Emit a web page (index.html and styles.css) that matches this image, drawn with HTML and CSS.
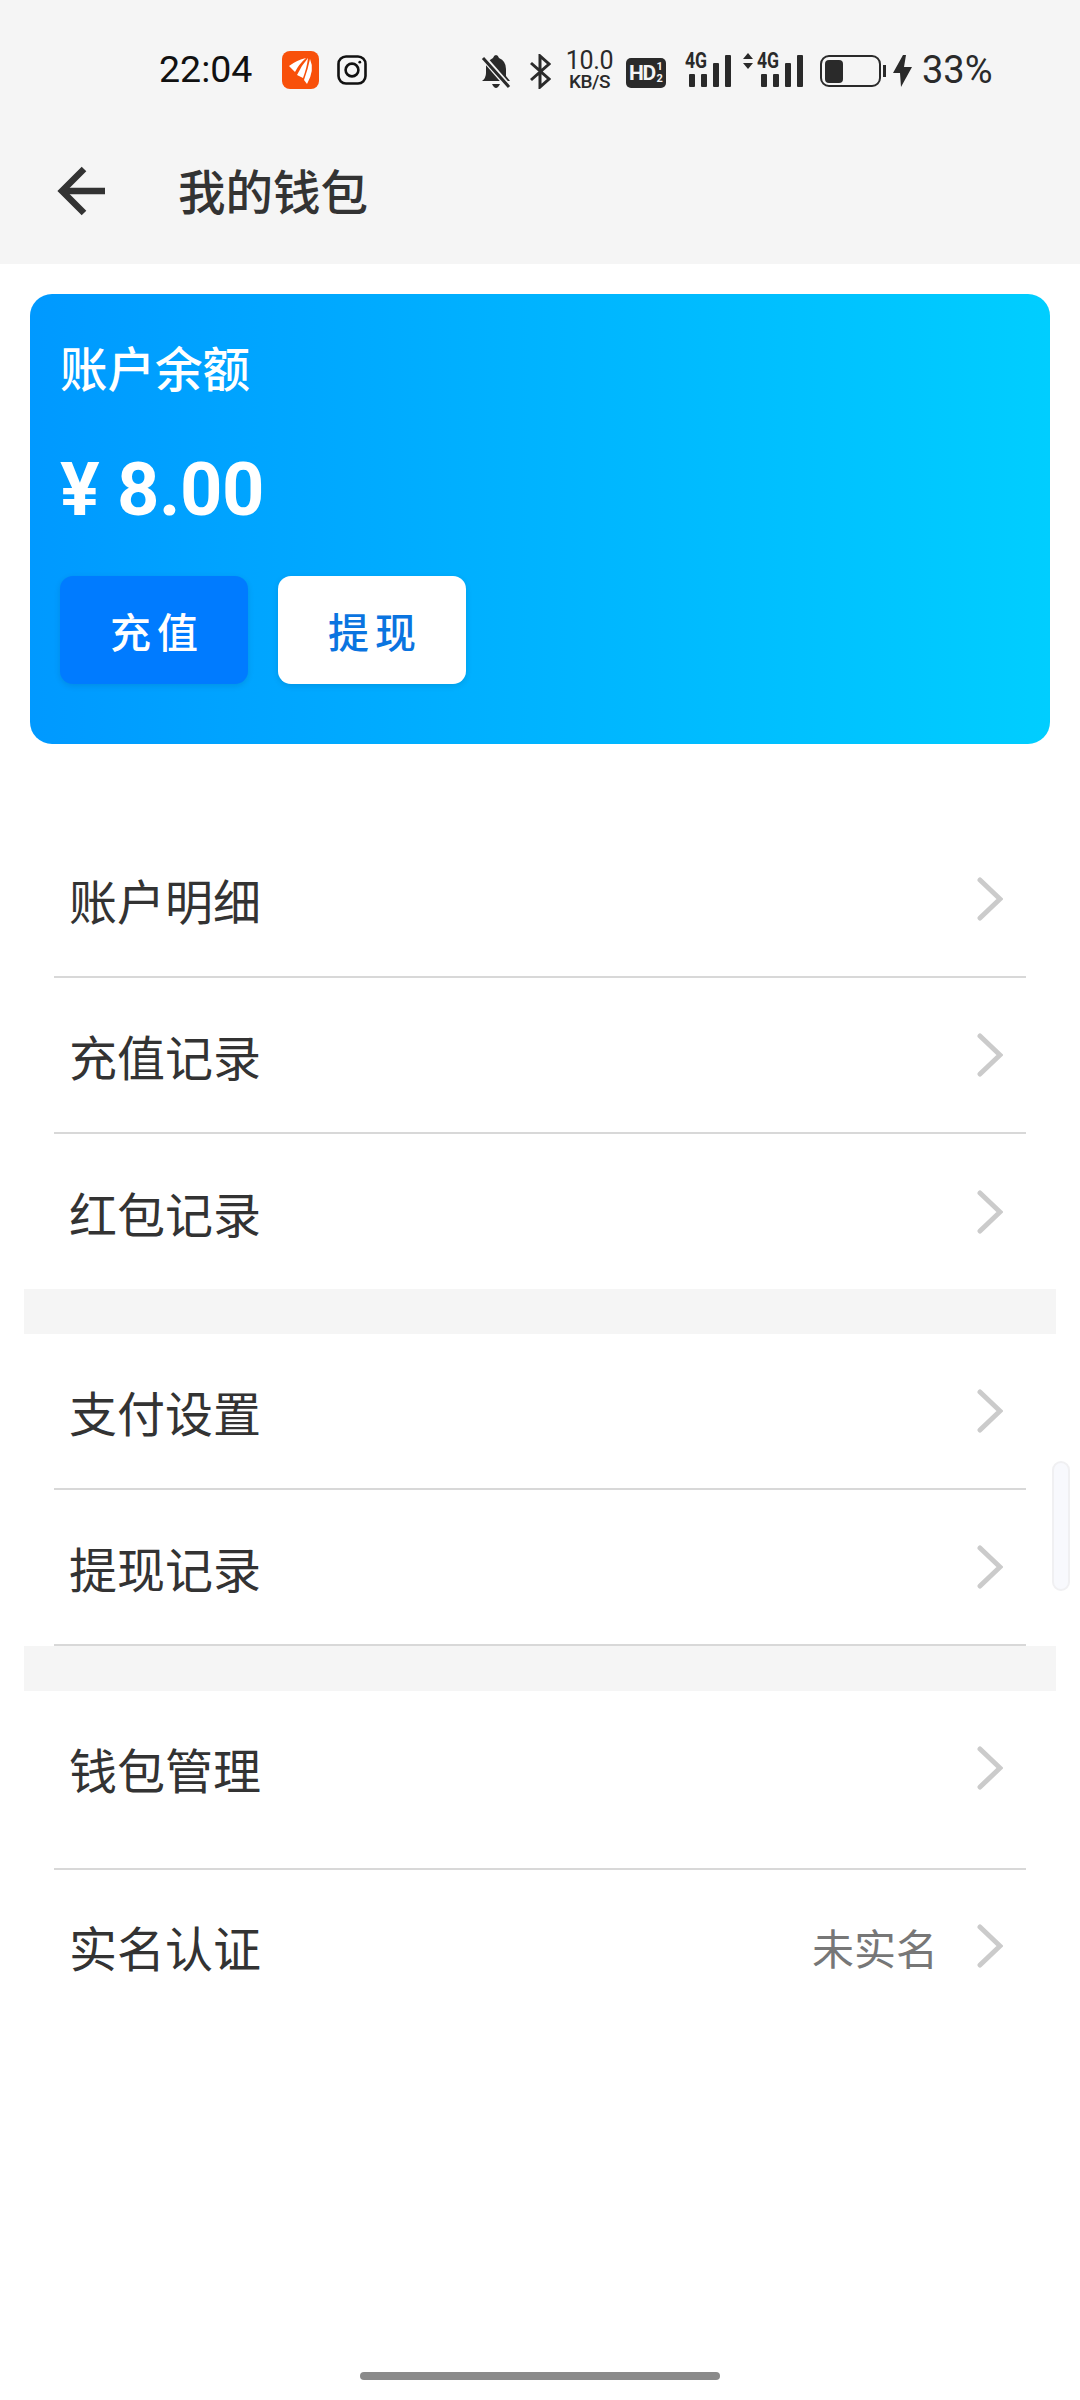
FILE: index.html
```html
<!DOCTYPE html>
<html lang="zh-CN">
<head>
    <meta charset="UTF-8">
    <meta name="viewport" content="width=device-width, initial-scale=1.0">
    <title>我的钱包</title>
    <link rel="stylesheet" href="styles.css">
</head>
<body>
    <div class="page">
        <header class="top">
            <div class="status-bar">
                <span class="time">22:04</span>
                <svg class="app-icon" width="37" height="38" viewBox="0 0 37 38">
                    <rect width="37" height="38" rx="8" fill="#f8500a"/>
                    <path d="M7 15 Q15 9 24 7 Q17 13 13 21 Z" fill="#fff"/>
                    <path d="M15 24 Q19 15 26 7 Q25 16 21 27 Z" fill="#fff"/>
                    <path d="M22 29 Q26 18 28 8 Q33 19 25 33 Z" fill="#fff"/>
                </svg>
                <svg class="insta-icon" width="30" height="30" viewBox="0 0 30 30" fill="none" stroke="#111" stroke-width="2.6">
                    <rect x="1.5" y="1.5" width="27" height="27" rx="7.5"/>
                    <circle cx="15" cy="15" r="6.4"/>
                    <circle cx="22.8" cy="7.2" r="1.4" fill="#111" stroke="none"/>
                </svg>
                <div class="status-right">
                    <svg class="ic-bell" width="30" height="36" viewBox="0 0 30 36">
                        <path d="M15 2 Q17 2 18 5 Q25 8 25 16 L25 23 L29 28 L1 28 Q5 25 5 20 L5 13 Q6 8 12 5 Q13 2 15 2 Z" fill="#2a2a2a"/>
                        <path d="M11 31 H19 Q17 35 15 35 Q13 35 11 31 Z" fill="#2a2a2a"/>
                        <path d="M1 3 L28 34" stroke="#f5f5f5" stroke-width="6"/>
                        <path d="M2 5 L28 34" stroke="#2a2a2a" stroke-width="3"/>
                    </svg>
                    <svg class="ic-bt" width="21" height="35" viewBox="0 0 21 35" fill="none" stroke="#2a2a2a" stroke-width="3">
                        <path d="M1 9 L19 25 L10 33 V2 L19 10 L1 26"/>
                    </svg>
                    <div class="speed"><span class="speed-num">10.0</span><span class="speed-unit">KB/S</span></div>
                    <div class="hd"><span class="hd-main">HD</span><span class="hd-sub"><i>1</i><i>2</i></span></div>
                    <div class="signal">
                        <span class="net">4G</span>
                        <div class="bars"><i class="b1"></i><i class="b2"></i><i class="b3"></i><i class="b4"></i></div>
                    </div>
                    <div class="signal signal-two">
                        <svg width="10" height="16" viewBox="0 0 10 16" fill="#2a2a2a"><path d="M5 0 L10 6 H0 Z M0 10 H10 L5 16 Z"/></svg>
                        <span class="net">4G</span>
                        <div class="bars"><i class="b1"></i><i class="b2"></i><i class="b3"></i><i class="b4"></i></div>
                    </div>
                    <div class="battery"><div class="battery-fill"></div></div>
                    <div class="battery-tip"></div>
                    <svg class="ic-bolt" width="19" height="32" viewBox="0 0 19 32"><path d="M10 0 L0 18 H7 L8 32 L19 12 H11 L13 0 Z" fill="#2a2a2a"/></svg>
                    <span class="percent">33%</span>
                </div>
            </div>
            <div class="nav-bar">
                <svg class="back" width="48" height="50" viewBox="0 0 48 50" fill="none" stroke="#333" stroke-width="6.5">
                    <path d="M48 25 H5"/>
                    <path d="M27 3 L5 25 L27 47"/>
                </svg>
                <h1 class="title">我的钱包</h1>
            </div>
        </header>

        <section class="balance-card">
            <div class="balance-label">账户余额</div>
            <div class="balance-amount">¥ 8.00</div>
            <div class="balance-actions">
                <div class="btn btn-primary">充值</div>
                <div class="btn btn-light">提现</div>
            </div>
        </section>

        <div class="menu">
            <div class="menu-row"><span>账户明细</span><svg class="chev" viewBox="0 0 26 44"><path d="M3 3 L23 22 L3 41"/></svg></div>
            <div class="menu-row"><span>充值记录</span><svg class="chev" viewBox="0 0 26 44"><path d="M3 3 L23 22 L3 41"/></svg></div>
            <div class="menu-row row-last no-line"><span>红包记录</span><svg class="chev" viewBox="0 0 26 44"><path d="M3 3 L23 22 L3 41"/></svg></div>
            <div class="menu-gap"></div>
            <div class="menu-row"><span>支付设置</span><svg class="chev" viewBox="0 0 26 44"><path d="M3 3 L23 22 L3 41"/></svg></div>
            <div class="menu-row"><span>提现记录</span><svg class="chev" viewBox="0 0 26 44"><path d="M3 3 L23 22 L3 41"/></svg></div>
            <div class="menu-gap"></div>
            <div class="menu-row row-wallet"><span>钱包管理</span><svg class="chev" viewBox="0 0 26 44"><path d="M3 3 L23 22 L3 41"/></svg></div>
            <div class="menu-row row-name no-line">
                <span>实名认证</span>
                <span class="row-value">未实名</span>
                <svg class="chev" viewBox="0 0 26 44"><path d="M3 3 L23 22 L3 41"/></svg>
            </div>
        </div>

        <div class="home-bar"></div>
        <div class="scroll-thumb"></div>
    </div>
</body>
</html>
```

FILE: styles.css
```css
* {
    box-sizing: border-box;
}
body {
    margin: 0;
    background-color: #fff;
    font-family: "Noto Sans CJK SC", "Noto Sans", sans-serif;
}
.page {
    position: relative;
    width: 1080px;
    height: 2400px;
    display: flex;
    flex-direction: column;
    overflow: hidden;
}

/* top */
.top {
    height: 264px;
    background-color: #f5f5f5;
}
.status-bar {
    height: 104px;
    padding: 34px 0 0 159px;
    display: flex;
    align-items: flex-start;
}
.time {
    width: 123px;
    font-family: "Roboto", sans-serif;
    font-size: 37.5px;
    line-height: 70px;
    color: #111;
}
.app-icon {
    flex: none;
    margin-top: 17px;
}
.insta-icon {
    flex: none;
    margin: 21px 0 0 18px;
}
.status-right {
    margin-left: 114px;
    display: flex;
    align-items: flex-start;
    color: #2a2a2a;
}
.ic-bell {
    margin-top: 19px;
}
.ic-bt {
    margin: 20px 0 0 19px;
}
.speed {
    margin: 16px 0 0 15px;
    width: 47px;
    display: flex;
    flex-direction: column;
    align-items: center;
    font-family: "Roboto", sans-serif;
}
.speed-num {
    font-size: 25px;
    line-height: 22px;
    letter-spacing: -0.3px;
}
.speed-unit {
    font-size: 19px;
    line-height: 20px;
    letter-spacing: -0.5px;
    font-weight: 500;
}
.hd {
    margin: 24px 0 0 13px;
    width: 40px;
    height: 30px;
    background-color: #2a2a2a;
    border-radius: 5px;
    display: flex;
    align-items: center;
    justify-content: center;
    color: #f5f5f5;
    font-family: "Roboto", sans-serif;
    font-weight: 700;
}
.hd-main {
    font-size: 21px;
    letter-spacing: -1.5px;
}
.hd-sub {
    display: flex;
    flex-direction: column;
    font-size: 11px;
    line-height: 12px;
    margin-left: 2px;
}
.hd-sub i {
    font-style: normal;
}
.signal {
    position: relative;
    margin: 19px 0 0 19px;
    width: 46px;
    height: 34px;
}
.signal-two {
    width: 60px;
    margin-left: 12px;
}
.signal-two svg {
    position: absolute;
    left: 0;
    top: 0;
}
.net {
    position: absolute;
    left: 0;
    top: -2px;
    font-family: "Roboto", sans-serif;
    font-size: 22px;
    line-height: 20px;
    font-weight: 700;
    transform: scaleX(.8);
    transform-origin: left;
}
.signal-two .net {
    left: 14px;
}
.bars {
    position: absolute;
    right: 0;
    bottom: 0;
    display: flex;
    align-items: flex-end;
    gap: 5.5px;
}
.bars i {
    width: 6.5px;
    background-color: #2a2a2a;
    border-radius: 1px;
}
.bars .b1 { height: 13px; }
.bars .b2 { height: 13px; }
.bars .b3 { height: 24px; }
.bars .b4 { height: 32px; }
.battery {
    margin: 21px 0 0 17px;
    width: 61px;
    height: 32px;
    border: 2.5px solid #2a2a2a;
    border-radius: 9px;
    padding: 2.5px;
}
.battery-fill {
    width: 18px;
    height: 100%;
    background-color: #2a2a2a;
    border-radius: 4px;
}
.battery-tip {
    margin: 31px 0 0 2px;
    width: 3px;
    height: 12px;
    background-color: #2a2a2a;
}
.ic-bolt {
    margin: 21px 0 0 7px;
}
.percent {
    margin: 1px 0 0 10px;
    font-family: "Roboto", sans-serif;
    font-size: 38px;
    line-height: 70px;
    color: #2a2a2a;
}
.nav-bar {
    height: 160px;
    display: flex;
    align-items: center;
    padding: 14px 0 0 57px;
}
.back {
    flex: none;
}
.title {
    margin: -3px 0 0 73px;
    font-size: 47.5px;
    font-weight: 500;
    color: #333;
}

/* saldo */
.balance-card {
    margin: 30px 30px 0 30px;
    height: 450px;
    padding: 0 30px;
    border-radius: 22px;
    background: linear-gradient(90deg, #0099ff 0%, #00ceff 100%);
    color: #fff;
}
.balance-label {
    height: 150px;
    font-size: 47.5px;
    line-height: 145px;
    font-weight: 500;
}
.balance-amount {
    height: 94px;
    font-family: "Roboto", sans-serif;
    font-size: 74px;
    font-weight: 700;
    line-height: 92px;
    letter-spacing: -0.5px;
}
.balance-actions {
    margin-top: 38px;
    display: flex;
    gap: 30px;
}
.btn {
    width: 188px;
    height: 108px;
    padding-left: 6px;
    border-radius: 13px;
    display: flex;
    align-items: center;
    justify-content: center;
    font-size: 41px;
    font-weight: 500;
    letter-spacing: 6px;
    box-shadow: 0 2px 6px rgba(0,0,0,0.1);
}
.btn-primary {
    background-color: #007bff;
    color: #fff;
}
.btn-light {
    background-color: #fff;
    color: #0a74e0;
}

/* lista */
.menu {
    margin: 78px 24px 0 24px;
}
.menu-row {
    height: 156px;
    margin: 0 30px;
    padding: 0 23px 0 15px;
    display: flex;
    align-items: center;
    justify-content: space-between;
    border-bottom: 2px solid #d8d8d8;
    font-size: 48px;
    color: #333;
}
.no-line {
    border-bottom: none;
}
.row-last {
    height: 155px;
}
.menu-gap {
    height: 45px;
    background-color: #f5f5f5;
}
.row-wallet {
    height: 179px;
    padding-bottom: 24px;
}
.row-name {
    height: 160px;
    padding-bottom: 8px;
}
.row-value {
    margin-left: auto;
    font-size: 42px;
    color: #777;
}
.chev {
    flex: none;
    width: 26px;
    height: 44px;
    fill: none;
    stroke: #cbcbcb;
    stroke-width: 5;
    stroke-linecap: round;
}
.row-value + .chev {
    margin-left: 39px;
}

.home-bar {
    margin: auto auto 20px auto;
    width: 360px;
    height: 8px;
    border-radius: 4px;
    background-color: #8a8a8a;
}

/* overlay */
.scroll-thumb {
    position: absolute;
    left: 1052px;
    top: 1461px;
    width: 18px;
    height: 130px;
    border-radius: 9px;
    background-color: #f8f9fd;
    border: 2px solid #f0f0f2;
}
```
